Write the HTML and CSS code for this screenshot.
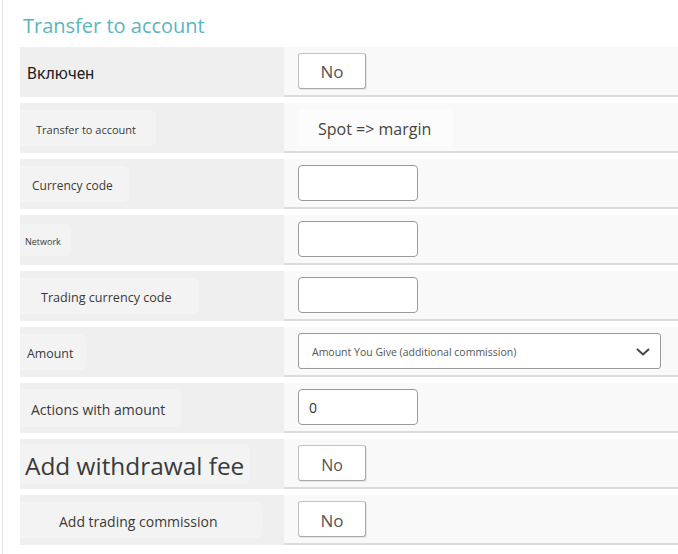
FILE: index.html
```html
<!DOCTYPE html>
<html lang="en">
<head>
<meta charset="utf-8">
<title>Transfer to account</title>
<link rel="stylesheet" href="styles.css">
</head>
<body>
<div class="panel">
  <h2 class="title">Transfer to account</h2>
  <div class="rows">
    <div class="row">
      <div class="label"><span class="lbl lbl-on">Включен</span></div>
      <div class="field"><button class="toggle">No</button></div>
    </div>
    <div class="row">
      <div class="label"><span class="lbl lbl-transfer">Transfer to account</span></div>
      <div class="field"><span class="static">Spot =&gt; margin</span></div>
    </div>
    <div class="row">
      <div class="label"><span class="lbl lbl-currency">Currency code</span></div>
      <div class="field"><input class="text-input" type="text"></div>
    </div>
    <div class="row">
      <div class="label"><span class="lbl lbl-network">Network</span></div>
      <div class="field"><input class="text-input" type="text"></div>
    </div>
    <div class="row">
      <div class="label"><span class="lbl lbl-trading">Trading currency code</span></div>
      <div class="field"><input class="text-input" type="text"></div>
    </div>
    <div class="row">
      <div class="label"><span class="lbl lbl-amount">Amount</span></div>
      <div class="field">
        <div class="select">
          <span class="select-text">Amount You Give (additional commission)</span>
          <svg class="chevron" width="14" height="8" viewBox="0 0 14 8"><path d="M1 1l6 5.5L13 1" fill="none" stroke="#444" stroke-width="2"/></svg>
        </div>
      </div>
    </div>
    <div class="row">
      <div class="label"><span class="lbl lbl-actions">Actions with amount</span></div>
      <div class="field"><input class="text-input num" type="text" value="0"></div>
    </div>
    <div class="row">
      <div class="label"><span class="lbl lbl-fee">Add withdrawal fee</span></div>
      <div class="field"><button class="toggle toggle-sm">No</button></div>
    </div>
    <div class="row">
      <div class="label"><span class="lbl lbl-commission">Add trading commission</span></div>
      <div class="field"><button class="toggle toggle-low">No</button></div>
    </div>
  </div>
</div>
</body>
</html>
```

FILE: styles.css
```css
* { box-sizing: border-box; }
html, body { margin: 0; padding: 0; background: #fff; }
body { font-family: "Open Sans", "Noto Sans", sans-serif; color: #333; }

.panel {
  margin-left: 2px;
  border-left: 1px solid #e4e4e4;
  padding-left: 17px;
  min-height: 554px;
}

.title {
  margin: 0;
  height: 47px;
  padding: 11px 0 0 3px;
  font-size: 20px;
  font-weight: 400;
  line-height: 30px;
  color: #5bb4c3;
}

.rows { display: flex; flex-direction: column; gap: 6px; }

.row {
  display: grid;
  grid-template-columns: 264px 1fr;
  height: 50px;
}

.label {
  background: #efefef;
  display: flex;
  align-items: center;
}

.lbl {
  display: inline-flex;
  align-items: center;
  height: 36px;
  padding-top: 3px;
  background: #f3f3f3;
  border-radius: 0 6px 6px 0;
  color: #3a3a3a;
  white-space: nowrap;
}

.lbl-on { background: transparent; padding: 2px 0 0 7px; font-family: Roboto, sans-serif; font-size: 16px; font-weight: 400; color: #1e1e1e; }
.lbl-transfer { font-size: 11px; padding-left: 16px; padding-right: 20px; }
.lbl-currency { font-size: 12px; padding-left: 12px; padding-right: 16px; }
.lbl-network { font-size: 9px; padding-left: 5px; padding-right: 10px; height: 32px; }
.lbl-trading { font-size: 12.6px; padding-left: 21px; padding-right: 27px; }
.lbl-amount { font-size: 12.4px; padding-left: 7px; padding-right: 13px; }
.lbl-actions { font-size: 14px; padding-left: 11px; padding-right: 16px; height: 38px; }
.lbl-fee { font-size: 24.4px; padding-left: 5px; padding-right: 6px; height: 40px; color: #3a3a3a; }
.lbl-commission { font-size: 14px; padding-left: 39px; padding-right: 44px; }

.field {
  background: #f9f9f9;
  border-bottom: 2px solid #dcdcdc;
  display: flex;
  align-items: center;
  padding-left: 14px;
}

.toggle {
  width: 68px;
  height: 36px;
  background: #fff;
  border: 1px solid #a9a9a9;
  border-top-color: #c4c4c4;
  border-left-color: #bdbdbd;
  border-radius: 3px;
  box-shadow: 1px 1px 0 rgba(0,0,0,0.08);
  font-family: "Open Sans", sans-serif;
  font-size: 17px;
  color: #555;
  padding: 0;
}
.toggle-sm { font-size: 16px; padding-top: 3px; }
.toggle-low { padding-top: 2px; }

.static {
  display: inline-flex;
  align-items: center;
  height: 37px;
  width: 155px;
  padding: 3px 0 0 20px;
  background: #fcfcfc;
  border-radius: 4px;
  font-size: 16px;
  color: #444;
}

.text-input {
  width: 120px;
  height: 36px;
  background: #fff;
  border: 1px solid #9a9a9a;
  border-radius: 4px;
  font-family: "Open Sans", sans-serif;
  font-size: 14px;
  color: #333;
  padding: 1px 10px 0;
  outline: none;
}

.select {
  width: 363px;
  height: 36px;
  background: #fff;
  border: 1px solid #9a9a9a;
  border-radius: 3px;
  display: flex;
  align-items: center;
  justify-content: space-between;
  padding: 1px 10px 0 13px;
}
.select-text { font-size: 10.5px; color: #555; }
.chevron { display: block; }
```
